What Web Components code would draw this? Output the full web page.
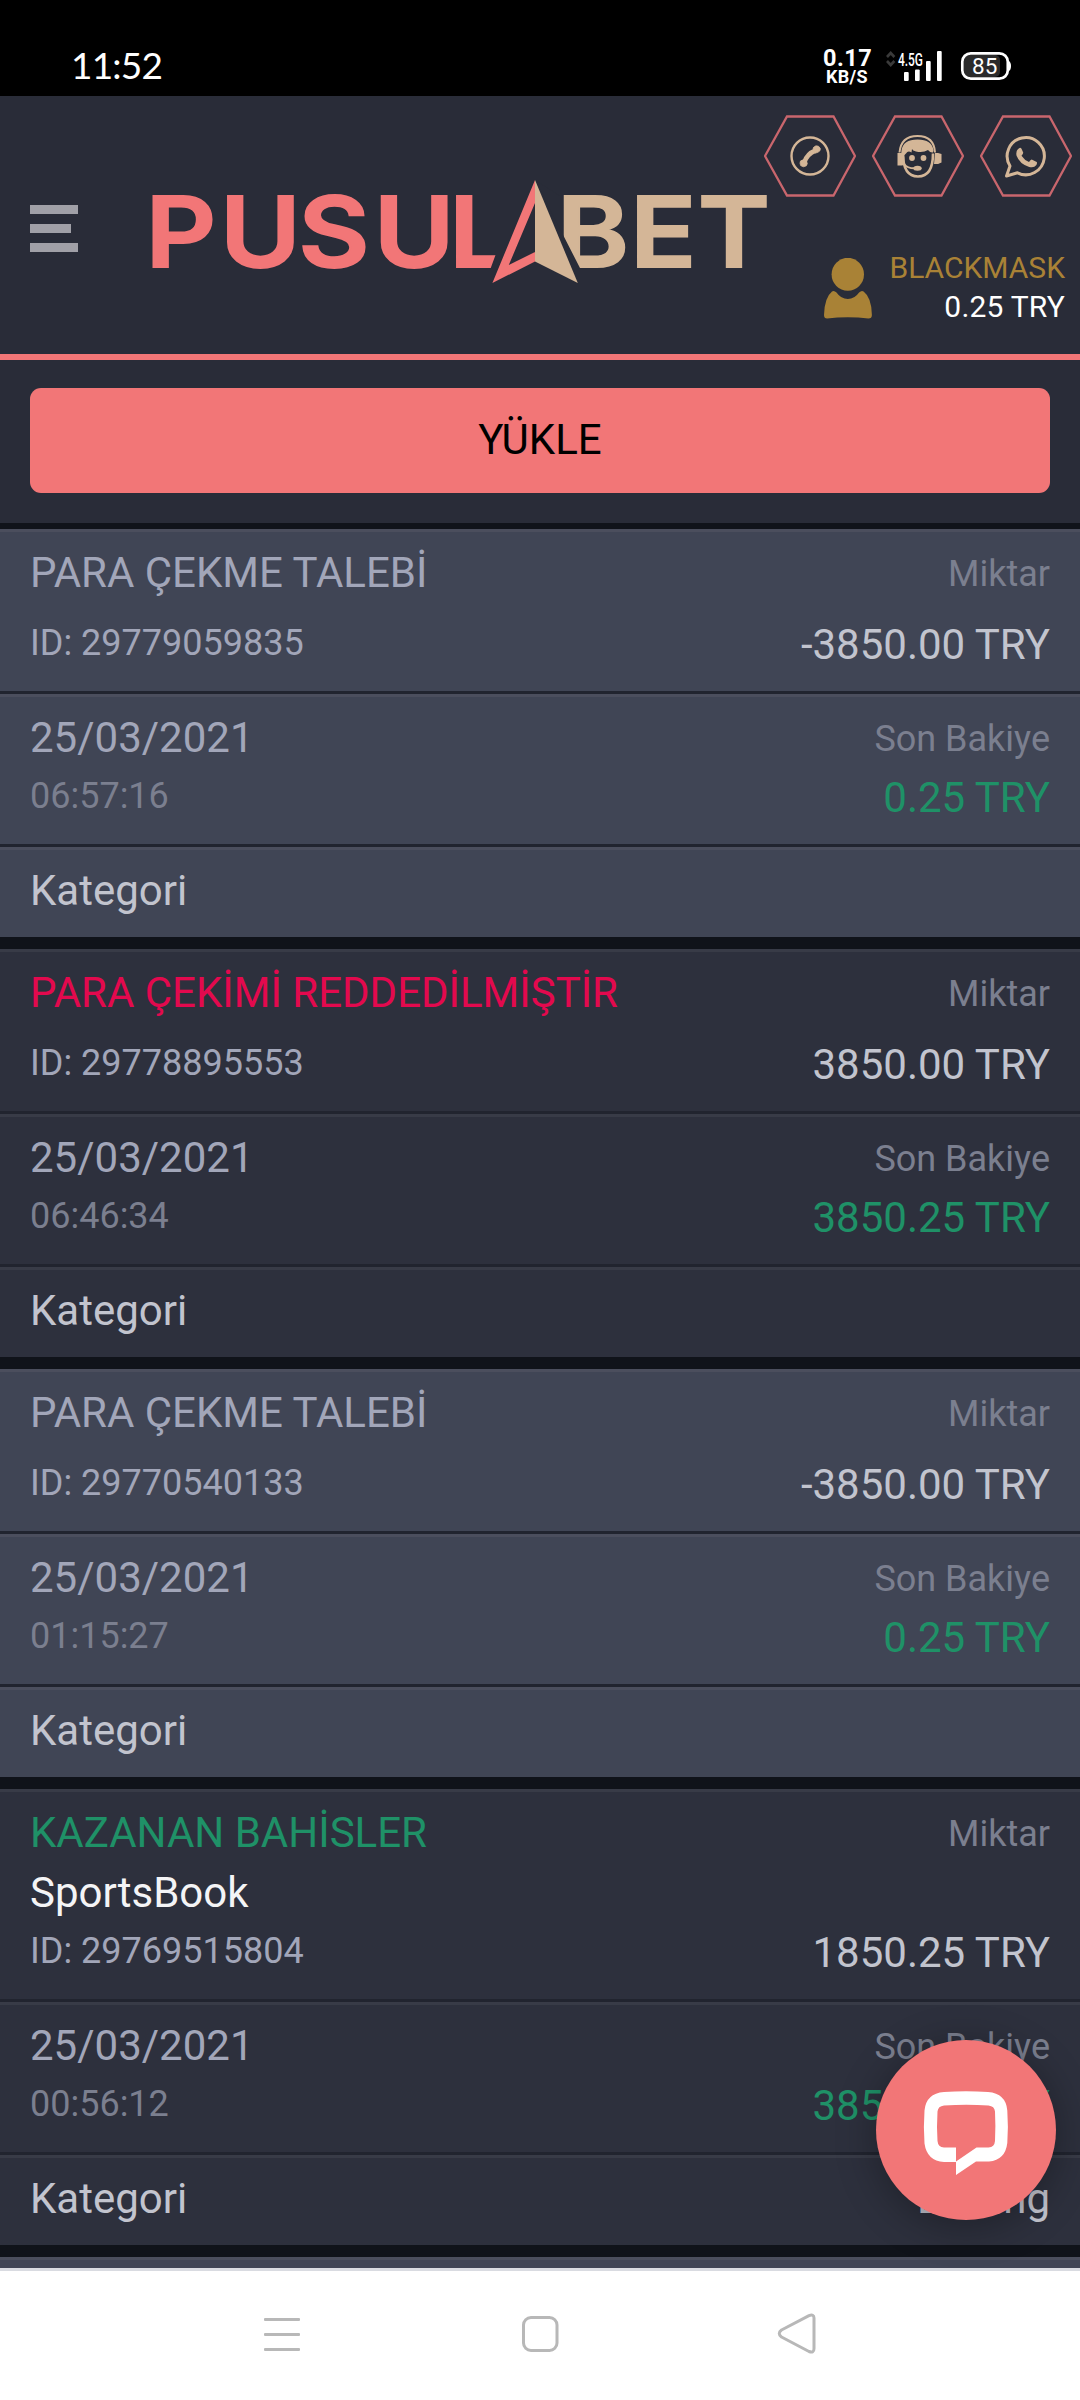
<!DOCTYPE html>
<html lang="tr">
<head>
<meta charset="utf-8">
<title>Pusulabet</title>
<style>
html,body{margin:0;padding:0}
body{width:1080px;height:2400px;overflow:hidden;background:#10131a;font-family:Roboto,"Liberation Sans",sans-serif}
</style>
</head>
<body>
<mobile-screen></mobile-screen>
<script>
const define=(name,html)=>customElements.define(name,class extends HTMLElement{
  constructor(){super();this.attachShadow({mode:'open'});}
  connectedCallback(){
    const t=document.createElement('template');
    t.innerHTML=typeof html==='function'?html(this):html;
    this.shadowRoot.replaceChildren(t.content.cloneNode(true));
  }
});

define('status-bar',`
<style>
:host{display:flex;height:96px;background:#000;color:#fff;box-sizing:border-box;padding:0 69px 0 71px;justify-content:space-between}
.time{font:400 37px/44px Lato,sans-serif;letter-spacing:-.8px;padding-top:43px}
.right{display:flex}
.speed{width:48px;margin-top:48px;text-align:center;font-weight:700}
.speed div:first-child{font-size:23.500px;line-height:21px;letter-spacing:.5px}
.speed div:last-child{font-size:18px;line-height:15px;letter-spacing:.3px}
.sig{margin-left:14px}
svg{display:block}
</style>
<div class="time">11:52</div>
<div class="right">
 <div class="speed"><div>0.17</div><div>KB/S</div></div>
 <svg class="sig" width="126" height="96" viewBox="885 0 126 96" font-family="Roboto">
  <g fill="none" stroke="#3a3a3a" stroke-width="2.6"><path d="M887 57l3.7-4 3.7 4M887 61l3.7 4 3.7-4"/></g>
  <text x="898" y="66" font-size="17.5" font-weight="500" fill="#fff" textLength="25" lengthAdjust="spacingAndGlyphs">4.5G</text>
  <g fill="#fff"><rect x="904" y="72" width="4.7" height="9" rx="1"/><rect x="915" y="69.5" width="4.7" height="11.500" rx="1"/><rect x="926" y="61" width="4.7" height="20" rx="1"/><rect x="937" y="51" width="4.700" height="30" rx="1"/></g>
  <rect x="964" y="55" width="36" height="22" rx="5" fill="#2b2b2b"/>
  <rect x="962.300" y="53.300" width="45.500" height="25.400" rx="8.500" fill="none" stroke="#fff" stroke-width="2.700"/>
  <path d="M1008 60.500q3 1 3 5.500t-3 5.500z" fill="#fff"/>
  <text x="972" y="73.500" font-size="22.500" fill="#fff" textLength="25.500">85</text>
 </svg>
</div>`);

define('menu-button',`
<style>
:host{display:flex;flex-direction:column;gap:10px;width:48px}
i{height:9px;background:#a0a0a7}i:nth-of-type(2){width:40.5px}
</style><i></i><i></i><i></i>`);

define('brand-logo',`
<style>:host{display:block}svg{display:block;overflow:visible}</style>
<svg width="620" height="110" viewBox="150 177 620 110">
 <g font-family="Inter" font-weight="600" font-size="98" stroke-width="1.800" stroke-linejoin="miter">
  <text transform="scale(1.12 1)" y="267.500" x="130 196.400 266.200 333.700 400.800" fill="#f27677" stroke="#f27677">PUSUL</text>
  <text transform="scale(1.12 1)" y="267.500" x="497 562.500 623" fill="#d4b697" stroke="#d4b697">BET</text>
 </g>
 <path d="M495.500 255L490 270H540V255zM535 180L580.500 269H560V196z" fill="#292c38"/>
 <path fill-rule="evenodd" d="M535 180V261.500L492.400 283zM535 203L508.800 265L535 252z" fill="#f27677"/>
 <path d="M535 180L577.800 283L535 261.500z" fill="#d4b697"/>
</svg>`);

const CONTACT={
 phone:`<circle cx="45" cy="40.500" r="18.500" fill="none" stroke="#d4b697" stroke-width="2.400"/>
  <path d="M39.500 46.500Q42 38.500 50.500 35" fill="none" stroke="#d4b697" stroke-width="4.600"/>
  <path d="M35.500 45.500q3-2.500 5.800.1q2 2.500 0 4.700q-3.200 2-5.600-.2q-1.300-2.400-.2-4.600zM48 32.500q2.700-3.300 5.400-1.800q3 2 1.500 4.600q-1.800 2-4.700 2.300z" fill="#d4b697" stroke="#d4b697" stroke-width=".8"/>`,
 support:`<path d="M26.500 37Q28 20.500 44.500 20.500T62 37" fill="none" stroke="#d4b697" stroke-width="2"/>
  <path d="M28.500 35Q30 24 44.500 24T60.500 35L60 37Q57.500 37.500 55 34.500Q50 37.500 43 36Q39.500 35 39 33.500L38.500 37Q35 34.500 33 38L31 40H28z" fill="#d4b697"/>
  <path d="M30 38Q30 61 45 61T60 38" fill="none" stroke="#d4b697" stroke-width="2.600"/>
  <path d="M24.500 37.500h4q3 1 3 6t-2 6.500h-5zM62 37.500h3l3.500 1v8.500l-3.500 1.500h-4z" fill="#d4b697"/>
  <circle cx="39" cy="42.500" r="2.900" fill="#d4b697"/><circle cx="50.500" cy="42.500" r="2.900" fill="#d4b697"/>
  <path d="M31 48.500Q34.500 53 42 52.800" fill="none" stroke="#d4b697" stroke-width="2"/><ellipse cx="44.500" cy="52.700" rx="4.200" ry="2.500" fill="#d4b697"/>`,
 whatsapp:`<path d="M29 50.500A18.600 18.600 0 1 1 36.500 57.300L25.500 60.500Z" fill="none" stroke="#d4b697" stroke-width="3" stroke-linejoin="round"/>
  <path d="M38.500 32.500q1.200-.5 2 .8l1.700 3.700q.3 1-1.700 3.300q3 4.500 7.500 6.300q1.500-2.300 2.700-2.500l5 2.300q.8.800-.3 3q-2.500 3.500-7.200 2Q38.500 48.500 35.500 40Q34.500 34.500 38.500 32.500z" fill="#d4b697"/>`
};
define('contact-hex',el=>`
<style>:host{display:block;width:92px;height:82px}svg{display:block}</style>
<svg width="92" height="82" viewBox="0 0 92 82"><path d="M1 41L23 1.500H69.500L91 41L69.500 80.500H23z" fill="none" stroke="#c9666d" stroke-width="2.300"/><g transform="translate(1 .5)">${CONTACT[el.getAttribute('kind')]}</g></svg>`);

define('user-badge',`
<style>
:host{display:flex;justify-content:flex-end;gap:17.500px}
svg{display:block;margin-top:10px}
.t{text-align:right;font-size:30px;line-height:39px}
.n{color:#a98236}.b{color:#fff;letter-spacing:.2px}
</style>
<svg width="48" height="62" viewBox="824 258 48 62" fill="#a98236"><ellipse cx="847.800" cy="274.300" rx="16.200" ry="16.500"/><path d="M832 291.500q2-1.500 4.500 1q4.500 6.500 11.300 6.500t11.300-6.500q2.500-2.500 4.500-1q8 6 8.300 23.500q0 3.500-3.500 3.500q-10-1.300-20.600-1.300t-20.600 1.300q-3.200 0-3.200-3.500q.5-17.500 8-23.500z"/></svg>
<div class="t"><div class="n">BLACKMASK</div><div class="b">0.25 TRY</div></div>`);

define('site-header',`
<style>
:host{display:flex;box-sizing:border-box;height:264px;background:#292c38;border-bottom:6px solid #f27677;padding-left:30px}
menu-button{margin-top:109px;flex:none}
brand-logo{margin:81px 0 0 72px;width:614px;flex:none}
.side{width:316px;flex:none;display:flex;flex-direction:column}
.hex{display:flex;gap:16px;margin-top:19px}
user-badge{margin:51px 15px 0 0}
</style>
<menu-button></menu-button>
<brand-logo></brand-logo>
<div class="side"><div class="hex"><contact-hex kind="phone"></contact-hex><contact-hex kind="support"></contact-hex><contact-hex kind="whatsapp"></contact-hex></div><user-badge></user-badge></div>`);

define('load-button',`
<style>
:host{display:block;padding:28px 30px 30px;background:#292c38;height:105px}
button{display:block;width:100%;height:105px;border:0;border-radius:11px;background:#f27677;color:#000;font:42px/103px Roboto,sans-serif;padding:0 0 2px}
</style><button><slot></slot></button>`);

define('card-row',`
<style>
:host{display:flex;justify-content:space-between;box-sizing:border-box;padding:17px 30px 0;height:var(--h);border-top:3px solid var(--hi);border-bottom:3px solid #21242f;background:var(--bg);white-space:nowrap}
:host(.last){border-bottom:0}
div{display:flex;flex-direction:column}
.r{align-items:flex-end}
</style><div><slot name="left"></slot></div><div class="r"><slot name="right"></slot></div>`);

define('transaction-card',el=>{
 const a=n=>el.getAttribute(n)||'';
 const sub=a('sub');
 return `
<style>
:host{display:block;--bg:#404555;--hi:#4b4e5d;margin-bottom:12px}
:host([dark]){--bg:#2d303d;--hi:#383b47}
span{display:block;font-size:42px;line-height:48px}
.sm{font-size:36px;line-height:42px}
.title{color:#a2a6b9}.red{color:#e3094e}.green{color:#1f9167}
.dim{color:#7b7f8f}.id{color:#a2a6b9}.val{color:#c2c4ce}.sub{color:#f4f4f6;margin-top:12px}
</style>
<card-row style="--h:${sub?213:165}px">
 <span slot="left" class="${a('tone')||'title'}">${a('title-text')}</span>
 ${sub?`<span slot="left" class="sub">${sub}</span>`:''}
 <span slot="left" class="sm id" style="margin-top:${sub?13:25}px">ID: ${a('ref')}</span>
 <span slot="right" class="sm dim" style="margin-top:4px">Miktar</span>
 <span slot="right" class="val" style="margin-top:${sub?74:26}px">${a('amount')} TRY</span>
</card-row>
<card-row style="--h:153px">
 <span slot="left" class="title">25/03/2021</span>
 <span slot="left" class="sm dim" style="margin-top:13px">${a('time')}</span>
 <span slot="right" class="sm dim" style="margin-top:4px">Son Bakiye</span>
 <span slot="right" class="green" style="margin-top:14px">${a('balance')} TRY</span>
</card-row>
<card-row class="last" style="--h:90px">
 <span slot="left" class="val">Kategori</span>
 <span slot="right" class="val">${a('category')}</span>
</card-row>`;});

define('chat-bubble',`
<style>
:host{position:absolute;left:876px;top:2040px;width:180px;height:180px;border-radius:50%;background:#f27677;box-shadow:0 6px 42px rgba(0,0,0,.32)}
svg{display:block}
</style>
<svg width="180" height="180" viewBox="876 2040 180 180"><path fill="#fff" fill-rule="evenodd" d="M944 2092q22-1.500 44 0q18 1.500 19.300 18.500q1.200 17 0 32.500q-2 17-18.300 18.500h-13L956 2175V2162H944q-17-1-19.500-18.500q-1.200-17 0-33Q926 2093.500 944 2092zM944 2105.500q-6 .7-6.500 6q-1 15.500 0 29.500q.5 6 6.500 6.500h12v14L976.500 2147.500H988.500q6-.5 6.500-6.500q.8-14.500 0-29.500q-.5-5.300-6.500-6q-22-1.300-44.500 0z"/></svg>`);

define('nav-bar',`
<style>
:host{display:flex;position:absolute;left:0;right:0;bottom:0;height:132px;background:#fff;border-top:3px solid #d9dbe1;box-sizing:border-box;justify-content:space-between;padding:41px 264px 0}
svg{display:block;overflow:visible}
</style>
<svg width="36" height="40" fill="#b8b8b8"><rect y="6" width="36" height="3" rx="1"/><rect y="21" width="36" height="3" rx="1"/><rect y="36" width="36" height="3" rx="1"/></svg>
<svg width="37" height="40" fill="none" stroke="#b8b8b8" stroke-width="3"><rect x="2.500" y="5.500" width="33.500" height="33" rx="7.500"/></svg>
<svg width="38" height="40" fill="none" stroke="#b8b8b8" stroke-width="3" stroke-linejoin="round"><path d="M31 3.700Q36 1.800 36 6V36.500Q36 41.500 31 39.500L3.500 25Q-1 21.500 3.500 18z"/></svg>`);

define('mobile-screen',`
<style>:host{display:block;position:relative;width:1080px;height:2400px;overflow:hidden;background:#10131a}main{display:block}load-button{margin-bottom:6px;box-sizing:content-box}</style>
<status-bar></status-bar>
<site-header></site-header>
<main>
<load-button>YÜKLE</load-button>
<transaction-card title-text="PARA ÇEKME TALEBİ" ref="29779059835" amount="-3850.00" time="06:57:16" balance="0.25"></transaction-card>
<transaction-card dark tone="red" title-text="PARA ÇEKİMİ REDDEDİLMİŞTİR" ref="29778895553" amount="3850.00" time="06:46:34" balance="3850.25"></transaction-card>
<transaction-card title-text="PARA ÇEKME TALEBİ" ref="29770540133" amount="-3850.00" time="01:15:27" balance="0.25"></transaction-card>
<transaction-card dark tone="green" title-text="KAZANAN BAHİSLER" sub="SportsBook" ref="29769515804" amount="1850.25" time="00:56:12" balance="3850.25" category="Betting"></transaction-card>
<card-row style="--h:165px;--bg:#404555;--hi:#4b4e5d"></card-row>
</main>
<chat-bubble></chat-bubble>
<nav-bar></nav-bar>`);
</script>
</body>
</html>
